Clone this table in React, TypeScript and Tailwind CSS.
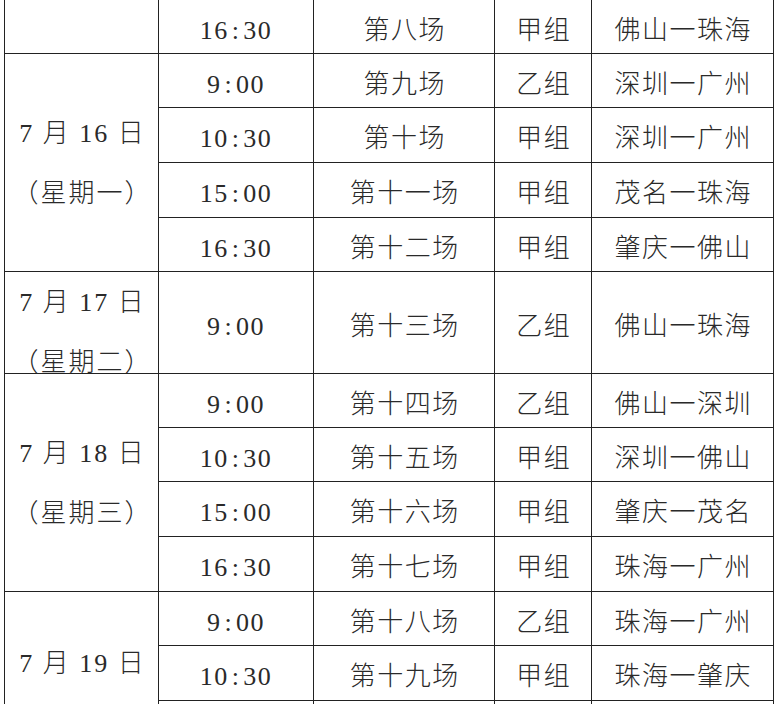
type Match = [string, string, string, string]

type Day = {
  date: string[]
  span: string
  align: string
  rows: Match[]
}

const days: Day[] = [
  {
    date: [],
    span: "row-span-1",
    align: "justify-center",
    rows: [["16:30", "第八场", "甲组", "佛山一珠海"]],
  },
  {
    date: ["7 月 16 日", "（星期一）"],
    span: "row-span-4",
    align: "justify-center pt-[2px]",
    rows: [
      ["9:00", "第九场", "乙组", "深圳一广州"],
      ["10:30", "第十场", "甲组", "深圳一广州"],
      ["15:00", "第十一场", "甲组", "茂名一珠海"],
      ["16:30", "第十二场", "甲组", "肇庆一佛山"],
    ],
  },
  {
    // the second line sits right on the border, as in the printed sheet
    date: ["7 月 17 日", "（星期二）"],
    span: "row-span-1",
    align: "justify-start pt-[1px]",
    rows: [["9:00", "第十三场", "乙组", "佛山一珠海"]],
  },
  {
    date: ["7 月 18 日", "（星期三）"],
    span: "row-span-4",
    align: "justify-center pt-[2px]",
    rows: [
      ["9:00", "第十四场", "乙组", "佛山一深圳"],
      ["10:30", "第十五场", "甲组", "深圳一佛山"],
      ["15:00", "第十六场", "甲组", "肇庆一茂名"],
      ["16:30", "第十七场", "甲组", "珠海一广州"],
    ],
  },
  {
    date: ["7 月 19 日"],
    span: "row-span-4",
    align: "justify-start pt-[42px]",
    rows: [
      ["9:00", "第十八场", "乙组", "珠海一广州"],
      ["10:30", "第十九场", "甲组", "珠海一肇庆"],
      ["", "", "", ""],
      ["", "", "", ""],
    ],
  },
]

const cell = "border-r border-b border-[#222] flex items-center justify-center pt-[7px]"

function Time({ value }: { value: string }) {
  const [h, m] = value.split(":")
  if (!m) return null
  return (
    <span className="tracking-[1.5px]">
      {h}
      <span className="inline-block mx-[3px]">:</span>
      {m}
    </span>
  )
}

export default function App() {
  return (
    <div
      className="h-[704px] overflow-hidden bg-white pl-[4px] text-[26px] font-light text-[#2a2a2a]"
      style={{ fontFamily: '"Liberation Serif", "Noto Sans CJK SC", serif' }}
    >
      <div className="grid w-[770px] border-l border-[#222] grid-cols-[154px_155px_181px_97px_182px] grid-rows-[54px_54px_55px_55px_54px_102px_54px_54px_55px_55px_54px_55px_54px_41px]">
        {days.map((day, i) => [
          <div
            key={`d${i}`}
            className={`${day.span} ${day.align} border-r border-b border-[#222] flex flex-col items-center leading-[60px]`}
          >
            {day.date.map((line) => (
              <div key={line} className="whitespace-pre tracking-[2px] pl-[2px]">
                {line}
              </div>
            ))}
          </div>,
          ...day.rows.map(([time, game, group, teams], j) => [
            <div key={`t${i}-${j}`} className={cell}>
              <Time value={time} />
            </div>,
            <div key={`g${i}-${j}`} className={cell}>
              <span className="tracking-[1.5px] pl-[1.5px]">{game}</span>
            </div>,
            <div key={`z${i}-${j}`} className={cell}>
              <span className="tracking-[1.5px] pl-[1.5px]">{group}</span>
            </div>,
            <div key={`m${i}-${j}`} className={cell}>
              <span className="tracking-[1.5px] pl-[1.5px]">{teams}</span>
            </div>,
          ]),
        ])}
      </div>
    </div>
  )
}
